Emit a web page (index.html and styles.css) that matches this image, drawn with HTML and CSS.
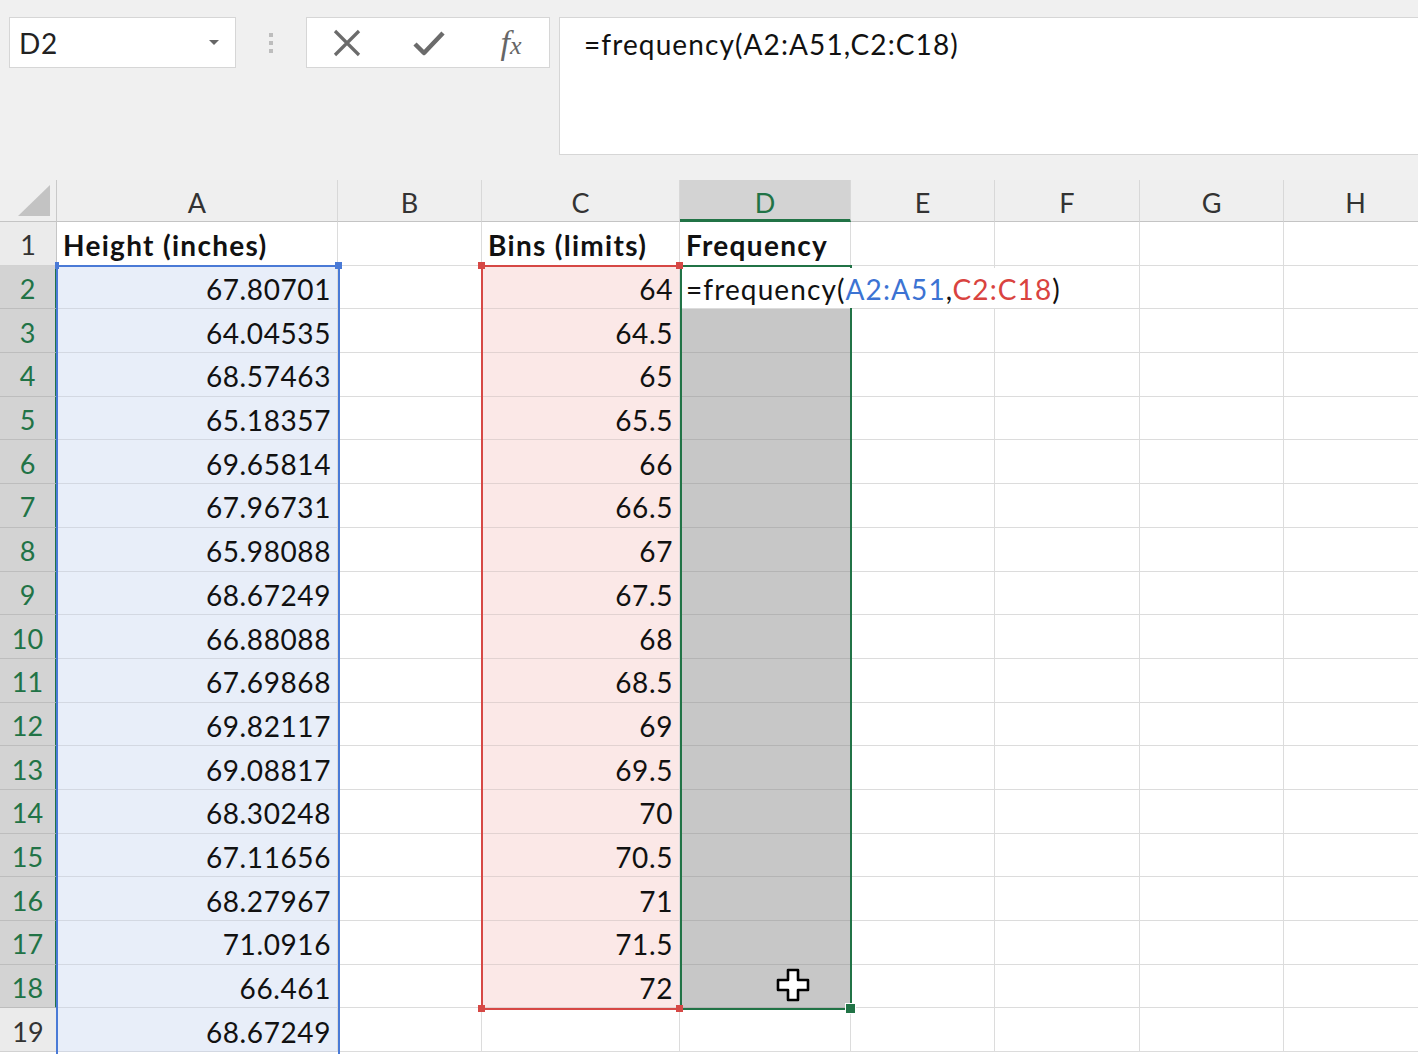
FILE: index.html
```html
<!DOCTYPE html>
<html lang="en">
<head>
  <meta charset="UTF-8" />
  <title>Frequency - Excel</title>
  <link rel="stylesheet" href="styles.css">
</head>
<body>
  <div class="toolbar">
    <div class="namebox">
      <span>D2</span>
      <span class="caret"></span>
    </div>
    <div class="grip"><i></i><i></i><i></i></div>
    <div class="buttons">
      <span class="btn">
        <svg width="30" height="30" viewBox="0 0 30 30"><path d="M3 3 L27 27 M27 3 L3 27" stroke="#6b6b6b" stroke-width="3.2" fill="none"/></svg>
      </span>
      <span class="btn">
        <svg width="32" height="30" viewBox="0 0 32 30"><path d="M2 16 L11 25 L30 5" stroke="#6b6b6b" stroke-width="4.5" fill="none" stroke-linejoin="round"/></svg>
      </span>
      <span class="btn fx"><i>f</i><i class="x">x</i></span>
    </div>
    <div class="formula">=frequency(A2:A51,C2:C18)</div>
  </div>

  <div class="sheet">
    <div class="corner"><svg width="34" height="32" viewBox="0 0 34 32"><polygon points="33,0 33,31 1,31" fill="#c3c3c3"/></svg></div>
    <div class="ch">A</div><div class="ch">B</div><div class="ch">C</div><div class="ch active">D</div><div class="ch">E</div><div class="ch">F</div><div class="ch">G</div><div class="ch">H</div>

    <div class="rh">1</div><div class="c hd">Height (inches)</div><div class="c"></div><div class="c hd">Bins (limits)</div><div class="c hd">Frequency</div><div class="c"></div><div class="c"></div><div class="c"></div><div class="c"></div>
    <div class="rh sel">2</div><div class="c a num">67.80701</div><div class="c"></div><div class="c bin num">64</div><div class="c edit"></div><div class="c"></div><div class="c"></div><div class="c"></div><div class="c"></div>
    <div class="rh sel">3</div><div class="c a num">64.04535</div><div class="c"></div><div class="c bin num">64.5</div><div class="c fq"></div><div class="c"></div><div class="c"></div><div class="c"></div><div class="c"></div>
    <div class="rh sel">4</div><div class="c a num">68.57463</div><div class="c"></div><div class="c bin num">65</div><div class="c fq"></div><div class="c"></div><div class="c"></div><div class="c"></div><div class="c"></div>
    <div class="rh sel">5</div><div class="c a num">65.18357</div><div class="c"></div><div class="c bin num">65.5</div><div class="c fq"></div><div class="c"></div><div class="c"></div><div class="c"></div><div class="c"></div>
    <div class="rh sel">6</div><div class="c a num">69.65814</div><div class="c"></div><div class="c bin num">66</div><div class="c fq"></div><div class="c"></div><div class="c"></div><div class="c"></div><div class="c"></div>
    <div class="rh sel">7</div><div class="c a num">67.96731</div><div class="c"></div><div class="c bin num">66.5</div><div class="c fq"></div><div class="c"></div><div class="c"></div><div class="c"></div><div class="c"></div>
    <div class="rh sel">8</div><div class="c a num">65.98088</div><div class="c"></div><div class="c bin num">67</div><div class="c fq"></div><div class="c"></div><div class="c"></div><div class="c"></div><div class="c"></div>
    <div class="rh sel">9</div><div class="c a num">68.67249</div><div class="c"></div><div class="c bin num">67.5</div><div class="c fq"></div><div class="c"></div><div class="c"></div><div class="c"></div><div class="c"></div>
    <div class="rh sel">10</div><div class="c a num">66.88088</div><div class="c"></div><div class="c bin num">68</div><div class="c fq"></div><div class="c"></div><div class="c"></div><div class="c"></div><div class="c"></div>
    <div class="rh sel">11</div><div class="c a num">67.69868</div><div class="c"></div><div class="c bin num">68.5</div><div class="c fq"></div><div class="c"></div><div class="c"></div><div class="c"></div><div class="c"></div>
    <div class="rh sel">12</div><div class="c a num">69.82117</div><div class="c"></div><div class="c bin num">69</div><div class="c fq"></div><div class="c"></div><div class="c"></div><div class="c"></div><div class="c"></div>
    <div class="rh sel">13</div><div class="c a num">69.08817</div><div class="c"></div><div class="c bin num">69.5</div><div class="c fq"></div><div class="c"></div><div class="c"></div><div class="c"></div><div class="c"></div>
    <div class="rh sel">14</div><div class="c a num">68.30248</div><div class="c"></div><div class="c bin num">70</div><div class="c fq"></div><div class="c"></div><div class="c"></div><div class="c"></div><div class="c"></div>
    <div class="rh sel">15</div><div class="c a num">67.11656</div><div class="c"></div><div class="c bin num">70.5</div><div class="c fq"></div><div class="c"></div><div class="c"></div><div class="c"></div><div class="c"></div>
    <div class="rh sel">16</div><div class="c a num">68.27967</div><div class="c"></div><div class="c bin num">71</div><div class="c fq"></div><div class="c"></div><div class="c"></div><div class="c"></div><div class="c"></div>
    <div class="rh sel">17</div><div class="c a num">71.0916</div><div class="c"></div><div class="c bin num">71.5</div><div class="c fq"></div><div class="c"></div><div class="c"></div><div class="c"></div><div class="c"></div>
    <div class="rh sel">18</div><div class="c a num">66.461</div><div class="c"></div><div class="c bin num">72</div><div class="c fq"></div><div class="c"></div><div class="c"></div><div class="c"></div><div class="c"></div>
    <div class="rh">19</div><div class="c a num">68.67249</div><div class="c"></div><div class="c"></div><div class="c"></div><div class="c"></div><div class="c"></div><div class="c"></div><div class="c"></div>

    <!-- range outlines drawn over the grid -->
    <div class="range blue"></div>
    <div class="range red"></div>
    <div class="range green"></div>
    <span class="knob kb1"></span><span class="knob kb2"></span>
    <span class="knob kr1"></span><span class="knob kr2"></span><span class="knob kr3"></span><span class="knob kr4"></span>
    <span class="knob kg"></span>

    <div class="editor">=frequency(<span class="ref-a">A2:A51</span>,<span class="ref-c">C2:C18</span>)</div>

    <svg class="cursor" width="34" height="34" viewBox="0 0 34 34">
      <path d="M12 2 H22 V12 H32 V22 H22 V32 H12 V22 H2 V12 H12 Z" fill="#fff" stroke="#000" stroke-width="2.6" stroke-linejoin="round"/>
    </svg>
  </div>
</body>
</html>
```

FILE: styles.css
```css
body {
  margin: 0;
  width: 1418px;
  height: 1054px;
  overflow: hidden;
  background: #fff;
  font-family: Lato, "Open Sans", sans-serif;
  color: #111;
}

/* formula bar area */
.toolbar {
  height: 180px;
  box-sizing: border-box;
  background: #f0f0f0;
  display: flex;
  align-items: flex-start;
  padding: 17px 0 0 9px;
}
.namebox {
  width: 227px;
  height: 51px;
  box-sizing: border-box;
  background: #fff;
  border: 1px solid #d6d6d6;
  display: flex;
  align-items: center;
  justify-content: space-between;
  padding: 0 16px 0 9px;
  font-size: 28px;
  letter-spacing: 0.6px;
  color: #222;
}
.caret {
  width: 0;
  height: 0;
  border-left: 5px solid transparent;
  border-right: 5px solid transparent;
  border-top: 5px solid #666;
}
.grip {
  width: 70px;
  display: flex;
  flex-direction: column;
  align-items: center;
  gap: 4px;
  padding-top: 16px;
}
.grip i {
  width: 4px;
  height: 4px;
  background: #bdbdbd;
}
.buttons {
  width: 244px;
  height: 51px;
  box-sizing: border-box;
  background: #fff;
  border: 1px solid #d6d6d6;
  display: flex;
  align-items: center;
  gap: 46px;
  padding-left: 22px;
}
.btn {
  width: 36px;
  display: flex;
  justify-content: center;
  align-items: center;
}
.fx {
  font-family: "Liberation Serif", serif;
  font-style: italic;
  font-size: 34px;
  color: #666;
}
.fx .x {
  font-size: 26px;
  margin-top: 6px;
}
.formula {
  margin-left: 9px;
  flex: 1;
  height: 138px;
  box-sizing: border-box;
  background: #fff;
  border: 1px solid #d6d6d6;
  border-right: none;
  padding: 9px 24px;
  font-size: 28px;
  line-height: 34px;
  letter-spacing: 1.1px;
}

/* grid */
.sheet {
  position: relative;
  display: grid;
  grid-template-columns: 57px 281px 144px 198px 171px 144px 145px 144px 144px;
  grid-template-rows: 42px repeat(19, 43.7px);
}
.corner {
  background: #efefef;
  border-right: 1px solid #c9c9c9;
  border-bottom: 1px solid #c4c4c4;
  display: flex;
  align-items: flex-end;
  justify-content: flex-end;
  padding: 0 5px 4px 0;
}
.ch {
  background: #efefef;
  border-right: 1px solid #d8d8d8;
  border-bottom: 1px solid #c4c4c4;
  display: flex;
  align-items: center;
  justify-content: center;
  padding-top: 4px;
  font-size: 27px;
  color: #333;
}
.ch.active {
  background: #d3d3d3;
  color: #217346;
  border-bottom: 3px solid #217346;
  padding-top: 6px;
}
.rh {
  background: #ebebeb;
  border-right: 1px solid #c6c6c6;
  border-bottom: 1px solid #d2d2d2;
  display: flex;
  align-items: center;
  justify-content: center;
  padding-top: 3px;
  font-size: 27px;
  color: #333;
}
.rh.sel {
  background: #d3d3d3;
  color: #217346;
  border-right: 2px solid #217346;
  border-bottom-color: #bdbdbd;
}
.c {
  border-right: 1px solid #dcdcdc;
  border-bottom: 1px solid #dcdcdc;
  display: flex;
  align-items: center;
  padding: 4px 6px 0 6px;
  font-size: 28px;
  letter-spacing: 0.6px;
  white-space: nowrap;
  overflow: hidden;
}
.num {
  justify-content: flex-end;
}
.hd {
  font-weight: 700;
  letter-spacing: 1.3px;
}
.a {
  background: #e8eef9;
  border-bottom-color: #d3d8e2;
}
.bin {
  background: #fbe8e7;
  border-bottom-color: #e2d2d1;
}
.fq {
  background: #c7c7c7;
  border-bottom-color: #b4b4b4;
  border-right-color: #c7c7c7;
}

/* overlays */
.range {
  position: absolute;
  box-sizing: border-box;
  border: 2px solid;
}
.blue {
  left: 56px;
  top: 84.7px;
  width: 284px;
  height: 800px;
  border-color: #4a7ad6;
}
.red {
  left: 481px;
  top: 84.7px;
  width: 201px;
  height: 745px;
  border-color: #d64845;
}
.green {
  left: 680px;
  top: 84.7px;
  width: 172px;
  height: 745px;
  border-color: #217346;
}
.knob {
  position: absolute;
  width: 7px;
  height: 7px;
}
.kb1 { left: 55px; top: 82px; width: 4px; background: #4a7ad6; }
.kb2 { left: 335px; top: 82px; background: #4a7ad6; }
.kr1 { left: 478px; top: 82px; background: #d64845; }
.kr2 { left: 676px; top: 82px; background: #d64845; }
.kr3 { left: 478px; top: 825px; background: #d64845; }
.kr4 { left: 676px; top: 825px; background: #d64845; }
.kg { left: 845px; top: 823px; width: 9px; height: 9px; background: #217346; border: 1px solid #fff; }
.editor {
  position: absolute;
  left: 683px;
  top: 87.5px;
  width: 380px;
  height: 40px;
  box-sizing: border-box;
  background: #fff;
  padding: 2px 0 0 3px;
  font-size: 28px;
  line-height: 38px;
  letter-spacing: 1.1px;
  white-space: nowrap;
}
.ref-a { color: #3c73d3; }
.ref-c { color: #d9433f; }
.cursor {
  position: absolute;
  left: 776px;
  top: 788px;
}
```
